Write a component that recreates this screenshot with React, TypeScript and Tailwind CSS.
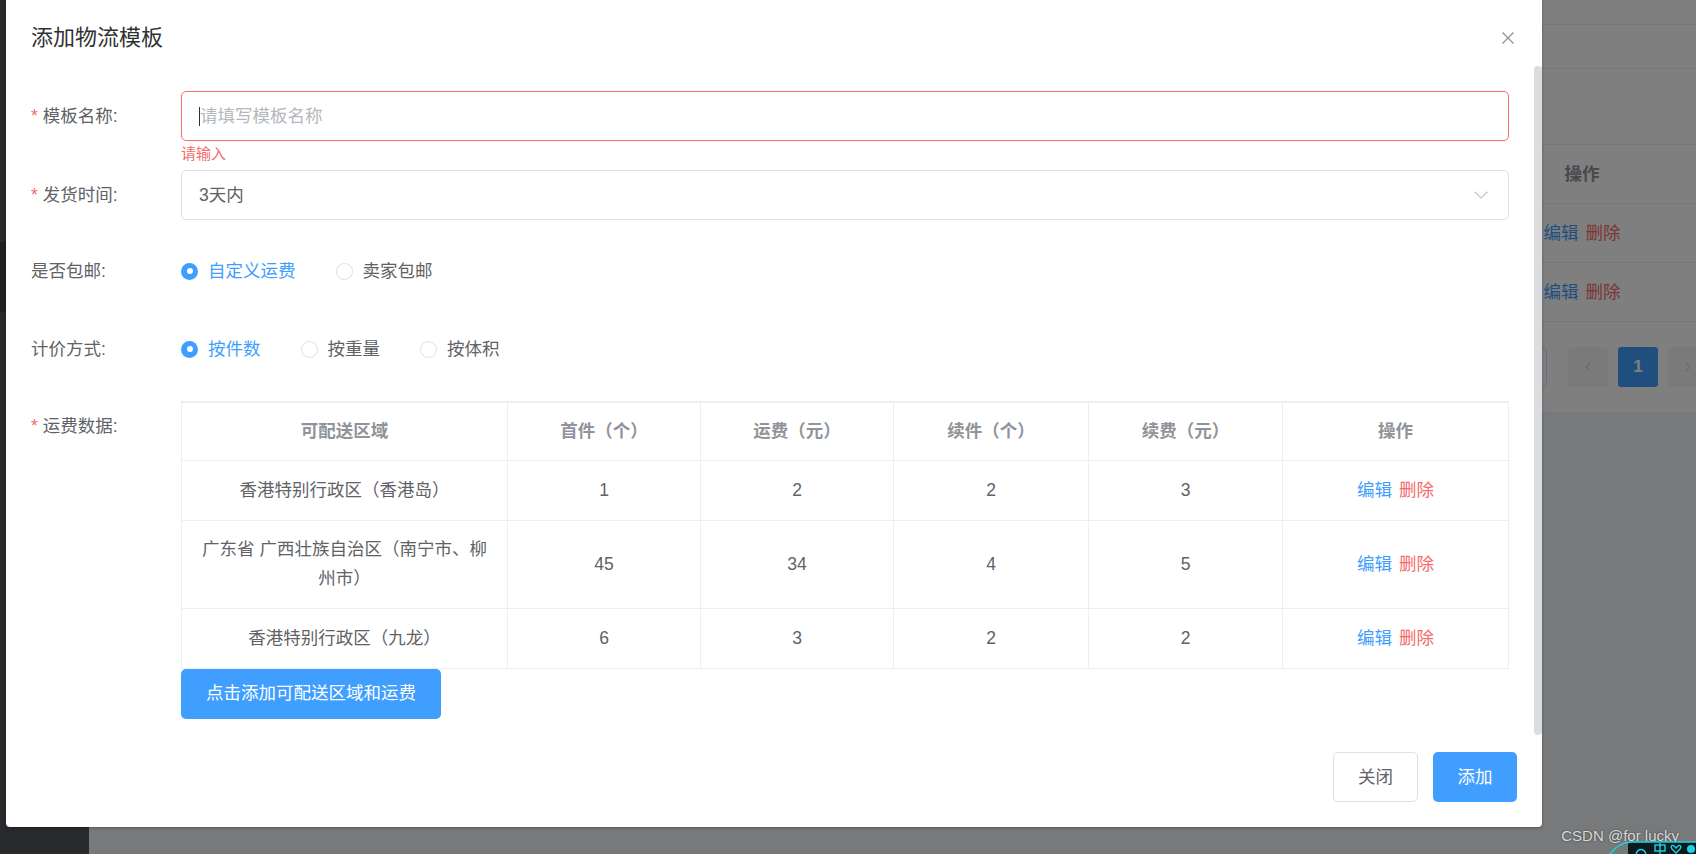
import { ChevronLeft, ChevronRight } from 'lucide-react';

interface FeeRow {
  area: string;
  first: string;
  fee: string;
  extra: string;
  extraFee: string;
  height: string;
}

const rows: FeeRow[] = [
  { area: '香港特别行政区（香港岛）', first: '1', fee: '2', extra: '2', extraFee: '3', height: 'h-[60px]' },
  { area: '广东省 广西壮族自治区（南宁市、柳州市）', first: '45', fee: '34', extra: '4', extraFee: '5', height: 'h-[88px]' },
  { area: '香港特别行政区（九龙）', first: '6', fee: '3', extra: '2', extraFee: '2', height: 'h-[60px]' },
];

const headers = ['可配送区域', '首件（个）', '运费（元）', '续件（个）', '续费（元）', '操作'];

function Radio({ label, checked }: { label: string; checked?: boolean }) {
  return (
    <div className="flex items-center gap-[10px] mr-[40px]">
      {checked ? (
        <span className="w-[17px] h-[17px] rounded-full bg-[#409eff] flex items-center justify-center">
          <span className="w-[6px] h-[6px] rounded-full bg-white" />
        </span>
      ) : (
        <span className="w-[17px] h-[17px] rounded-full border border-[#dcdfe6] bg-white" />
      )}
      <span className={checked ? 'text-[#409eff]' : 'text-[#606266]'}>{label}</span>
    </div>
  );
}

function Label({ text, required }: { text: string; required?: boolean }) {
  return (
    <div className="w-[150px] shrink-0 h-[50px] flex items-center text-[#606266]">
      {required && <span className="text-[#f56c6c] mr-[5px]">*</span>}
      <span>{text}</span>
    </div>
  );
}

function BackgroundPage() {
  return (
    <div className="flex w-full h-full">
      <div className="w-[89px] shrink-0 bg-[#50545c] flex flex-col">
        <div className="h-[242px]" />
        <div className="h-[70px] bg-[#3e424a]" />
      </div>
      <div className="flex-1 min-w-0 overflow-hidden">
        <div className="ml-[20px] w-[1640px] bg-white">
          <div className="h-[25px] border-b border-[#ebeef5]" />
          <div className="h-[44px] border-b border-[#ebeef5]" />
          <div className="h-[76px] border-b border-[#ebeef5]" />
          <div className="h-[59px] border-b border-[#ebeef5] flex justify-end pr-[107px]">
            <div className="w-[120px] flex items-center justify-center font-bold text-[#909399]">操作</div>
          </div>
          {[0, 1].map((i) => (
            <div key={i} className="h-[59px] border-b border-[#ebeef5] flex justify-end pr-[107px]">
              <div className="w-[120px] flex items-center justify-center gap-[7px]">
                <span className="text-[#409eff]">编辑</span>
                <span className="text-[#f56c6c]">删除</span>
              </div>
            </div>
          ))}
          <div className="h-[90px] pt-[25px] flex justify-end pr-[41px]">
            <div className="flex h-[40px]">
              <div className="w-[100px] h-[40px] border border-[#dcdfe6] rounded-[4px] mr-[21px]" />
              <div className="w-[40px] h-[40px] bg-[#f4f4f5] rounded-[3px] flex items-center justify-center text-[#c0c4cc] mr-[10px]">
                <ChevronLeft size={16} strokeWidth={1.5} />
              </div>
              <div className="w-[40px] h-[40px] bg-[#409eff] rounded-[3px] flex items-center justify-center text-white font-bold text-[17px] mr-[10px]">
                1
              </div>
              <div className="w-[40px] h-[40px] bg-[#f4f4f5] rounded-[3px] flex items-center justify-center text-[#c0c4cc]">
                <ChevronRight size={16} strokeWidth={1.5} />
              </div>
            </div>
          </div>
        </div>
      </div>
    </div>
  );
}

export default function App() {
  return (
    <div className="relative w-[1696px] h-[854px] overflow-hidden bg-[#f0f2f5] text-[17.5px] font-['Liberation_Sans','Noto_Sans_CJK_SC',sans-serif]">
      <BackgroundPage />

      {/* modal mask */}
      <div className="absolute inset-0 bg-black/50" />

      {/* dialog */}
      <div className="absolute left-[6px] top-0 w-[1536px] h-[827px] bg-white rounded-b-[4px] flex flex-col shadow-[0_1px_3px_rgba(0,0,0,0.3)]">
        <div className="h-[66px] shrink-0 flex items-start justify-between pt-[25px] pl-[25px] pr-[28px]">
          <span className="text-[22px] leading-[26px] text-[#303133]">添加物流模板</span>
          <div className="h-[26px] flex items-center">
            <svg width="12" height="12" viewBox="0 0 12 12">
              <path d="M0.5 0.5 L11.5 11.5 M11.5 0.5 L0.5 11.5" stroke="#909399" strokeWidth="1.3" fill="none" />
            </svg>
          </div>
        </div>

        <div className="h-[669px] shrink-0 flex">
          <div className="flex-1 min-w-0 overflow-hidden px-[25px] pt-[25px]">
            {/* 模板名称 */}
            <div className="flex">
              <Label text="模板名称:" required />
              <div className="flex-1">
                <div className="h-[50px] border border-[#f56c6c] rounded-[5px] flex items-center pl-[17px]">
                  <span className="w-px h-[19px] bg-[#303133]" />
                  <span className="text-[#b4b7bd]">请填写模板名称</span>
                </div>
                <div className="pt-[5px] text-[15px] leading-[15px] text-[#f56c6c] mb-[9px]">请输入</div>
              </div>
            </div>

            {/* 发货时间 */}
            <div className="flex mb-[26px]">
              <Label text="发货时间:" required />
              <div className="flex-1 h-[50px] border border-[#dcdfe6] rounded-[5px] flex items-center justify-between pl-[17px] pr-[20px]">
                <span className="text-[#606266]">3天内</span>
                <svg width="14" height="8" viewBox="0 0 14 8">
                  <path d="M0.5 0.8 L7 7 L13.5 0.8" stroke="#c0c4cc" strokeWidth="1.2" fill="none" />
                </svg>
              </div>
            </div>

            {/* 是否包邮 */}
            <div className="flex mb-[28px]">
              <Label text="是否包邮:" />
              <div className="flex-1 h-[50px] flex items-center">
                <Radio label="自定义运费" checked />
                <Radio label="卖家包邮" />
              </div>
            </div>

            {/* 计价方式 */}
            <div className="flex mb-[27px]">
              <Label text="计价方式:" />
              <div className="flex-1 h-[50px] flex items-center">
                <Radio label="按件数" checked />
                <Radio label="按重量" />
                <Radio label="按体积" />
              </div>
            </div>

            {/* 运费数据 */}
            <div className="flex">
              <Label text="运费数据:" required />
              <div className="flex-1">
                <table className="w-full table-fixed border-collapse border border-[#ebeef5] border-t-2">
                  <colgroup>
                    <col className="w-[326px]" />
                    <col className="w-[193px]" />
                    <col className="w-[193px]" />
                    <col className="w-[195px]" />
                    <col className="w-[194px]" />
                    <col />
                  </colgroup>
                  <thead>
                    <tr className="h-[58px]">
                      {headers.map((h) => (
                        <th key={h} className="border border-[#ebeef5] font-bold text-[#909399] text-center">
                          {h}
                        </th>
                      ))}
                    </tr>
                  </thead>
                  <tbody>
                    {rows.map((r) => (
                      <tr key={r.area} className={r.height}>
                        <td className="border border-[#ebeef5] text-center text-[#606266] px-[12px] leading-[29px]">{r.area}</td>
                        <td className="border border-[#ebeef5] text-center text-[#606266]">{r.first}</td>
                        <td className="border border-[#ebeef5] text-center text-[#606266]">{r.fee}</td>
                        <td className="border border-[#ebeef5] text-center text-[#606266]">{r.extra}</td>
                        <td className="border border-[#ebeef5] text-center text-[#606266]">{r.extraFee}</td>
                        <td className="border border-[#ebeef5] text-center">
                          <div className="flex justify-center gap-[7px]">
                            <span className="text-[#409eff]">编辑</span>
                            <span className="text-[#f56c6c]">删除</span>
                          </div>
                        </td>
                      </tr>
                    ))}
                  </tbody>
                </table>
                <button className="h-[50px] px-[25px] bg-[#409eff] text-white rounded-[5px]">
                  点击添加可配送区域和运费
                </button>
              </div>
            </div>
          </div>
          <div className="w-[8px] shrink-0 bg-[#dcdde0] rounded-[4px]" />
        </div>

        <div className="flex justify-end gap-[15px] pt-[17px] pr-[25px]">
          <button className="w-[85px] h-[50px] border border-[#dcdfe6] rounded-[5px] text-[#606266] bg-white">关闭</button>
          <button className="w-[84px] h-[50px] rounded-[5px] text-white bg-[#409eff]">添加</button>
        </div>
      </div>

      {/* watermark */}
      <div className="absolute right-[17px] bottom-[10px] text-[15px] leading-[16px] text-[#dadada] [text-shadow:0_0_2px_rgba(0,0,0,0.6)]">
        CSDN @for lucky
      </div>
      <svg className="absolute left-[1606px] top-[840px]" width="90" height="14" viewBox="0 0 90 14">
        <path d="M22 2 H90 V14 H22 Z" fill="#0b1a1c" />
        <path d="M4 14 C10 6 18 2 26 2 H90" stroke="#18d4e8" strokeWidth="1.6" fill="none" />
        <path d="M30 14 C32 8 38 8 40 14" stroke="#18d4e8" strokeWidth="1.4" fill="none" />
        <rect x="49" y="5" width="10" height="6" stroke="#18d4e8" strokeWidth="1.4" fill="none" />
        <path d="M54 3 V14" stroke="#18d4e8" strokeWidth="1.4" />
        <path d="M70 13 L66 9 C64 7 66 4 68 6 L70 8 L72 6 C74 4 76 7 74 9 Z" stroke="#18d4e8" strokeWidth="1.4" fill="none" />
        <circle cx="85" cy="9" r="4" fill="#18d4e8" />
      </svg>
    </div>
  );
}
